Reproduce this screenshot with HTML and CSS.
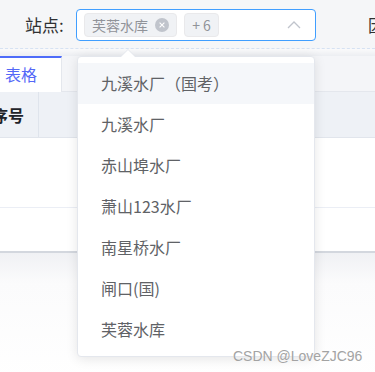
FILE: index.html
```html
<!DOCTYPE html>
<html lang="zh">
<head>
<meta charset="utf-8">
<link rel="stylesheet" href="styles.css">
</head>
<body>
<div class="page">
  <div class="filter">
    <label class="lbl">站点:</label>
    <div class="select">
      <span class="tag">芙蓉水库<span class="tag-close"><svg width="14" height="14" viewBox="0 0 14 14"><circle cx="7" cy="7" r="7" fill="#c0c4cc"/><path d="M4.6 4.6 9.4 9.4M9.4 4.6 4.6 9.4" stroke="#fff" stroke-width="1.1"/></svg></span></span>
      <span class="tag tag-more">+ 6</span>
      <svg class="arrow" width="14" height="8" viewBox="0 0 14 8"><path d="M1 7 7 1l6 6" fill="none" stroke="#c0c4cc" stroke-width="1.3"/></svg>
    </div>
    <label class="lbl lbl2">因子:</label>
  </div>
  <div class="gap"></div>
  <div class="card">
    <div class="tabs">
      <div class="tab active">表格</div>
    </div>
    <div class="thead">
      <div class="th first">序号</div>
      <div class="th rest"></div>
    </div>
    <div class="row r1"></div>
    <div class="row r2"></div>
  </div>
  <div class="below"></div>

  <div class="dropdown">
    <div class="caret"></div>
    <ul class="options">
      <li class="opt hover">九溪水厂（国考）</li>
      <li class="opt">九溪水厂</li>
      <li class="opt">赤山埠水厂</li>
      <li class="opt">萧山123水厂</li>
      <li class="opt">南星桥水厂</li>
      <li class="opt">闸口(国)</li>
      <li class="opt">芙蓉水库</li>
    </ul>
  </div>
  <div class="watermark">CSDN @LoveZJC96</div>
</div>
</body>
</html>
```
FILE: styles.css
```css
* { box-sizing: border-box; }
html, body { margin: 0; padding: 0; }
body {
  width: 375px;
  height: 372px;
  overflow: hidden;
  background: #f5f7fa;
  font-family: "Noto Sans CJK SC", "Noto Sans", sans-serif;
}
.page { position: relative; width: 375px; height: 372px; overflow: hidden; }

.filter {
  height: 49px;
  display: flex;
  align-items: flex-start;
  padding: 9px 0 0 25px;
  border-bottom: 1px dashed #d6e2f3;
  white-space: nowrap;
  background: #f5f6f8;
}
.lbl {
  font-size: 17px;
  line-height: 32px;
  color: #303133;
  width: 51px;
  flex: none;
}
.lbl2 { margin-left: 52px; }
.select {
  flex: none;
  width: 240px;
  height: 32px;
  border: 1px solid #409eff;
  border-radius: 4px;
  background: #fff;
  display: flex;
  align-items: center;
  gap: 7px;
  padding-left: 7px;
  position: relative;
}
.tag {
  height: 24px;
  display: inline-flex;
  align-items: center;
  padding: 0 7px 0 7px;
  background: #f0f2f5;
  border: 1px solid #e9e9eb;
  border-radius: 4px;
  color: #909399;
  font-size: 14px;
  line-height: 22px;
}
.tag-close { display: inline-flex; margin-left: 7px; }
.tag-more { width: 35px; justify-content: center; padding: 0; }
.arrow { position: absolute; right: 14px; top: 11px; }

.gap {
  height: 7px;
  background: linear-gradient(#fafafb, #eceef2);
}
.card { background: #fff; }
.tabs {
  height: 36px;
  background: #f4f5f8;
  border-bottom: 1px solid #e4e7ed;
  display: flex;
}
.tab {
  width: 62px;
  height: 36px;
  background: #fff;
  border-top: 2px solid #4e6cf9;
  border-right: 1px solid #e4e7ed;
  color: #5468f7;
  font-size: 16px;
  line-height: 32px;
  padding-left: 5px;
}
.thead {
  height: 46px;
  display: flex;
  background: #eef1f6;
  border-bottom: 1px solid #e1e5ec;
}
.th { height: 100%; }
.th.first {
  width: 39px;
  border-right: 1px solid #dfe4ec;
  font-size: 16px;
  font-weight: 700;
  color: #1f2329;
  line-height: 46px;
  text-indent: -8px;
  white-space: nowrap;
  overflow: hidden;
}
.th.rest { flex: 1; }
.row { background: #fff; }
.r1 { height: 70px; border-bottom: 1px solid #ebeef5; }
.r2 { height: 45px; border-bottom: 2px solid #d3d7de; }
.below {
  height: 130px;
  background: linear-gradient(#f0f1f4, #fbfbfc 30px, #fff);
}

.dropdown {
  position: absolute;
  left: 77px;
  top: 56px;
  width: 238px;
  height: 301px;
  background: #fff;
  border: 1px solid #e4e7ed;
  border-radius: 4px;
  box-shadow: 0 2px 12px rgba(0, 0, 0, 0.1);
}
.caret {
  position: absolute;
  left: 43px;
  top: -7px;
  width: 0;
  height: 0;
  border-left: 7px solid transparent;
  border-right: 7px solid transparent;
  border-bottom: 7px solid #fff;
  filter: drop-shadow(0 -1px 0 #e4e7ed);
}
.options {
  list-style: none;
  margin: 0;
  padding: 6px 0;
}
.opt {
  height: 41px;
  line-height: 41px;
  padding-left: 23px;
  font-size: 16px;
  color: #606266;
  white-space: nowrap;
}
.opt.hover { background: #f5f7fa; }

.watermark {
  position: absolute;
  left: 233px;
  top: 347px;
  font-family: "Liberation Sans", Arial, sans-serif;
  font-size: 14px;
  line-height: 18px;
  color: #a3a3a3;
  text-shadow: 0 0 1px rgba(255, 255, 255, 0.8);
  white-space: nowrap;
}
```
